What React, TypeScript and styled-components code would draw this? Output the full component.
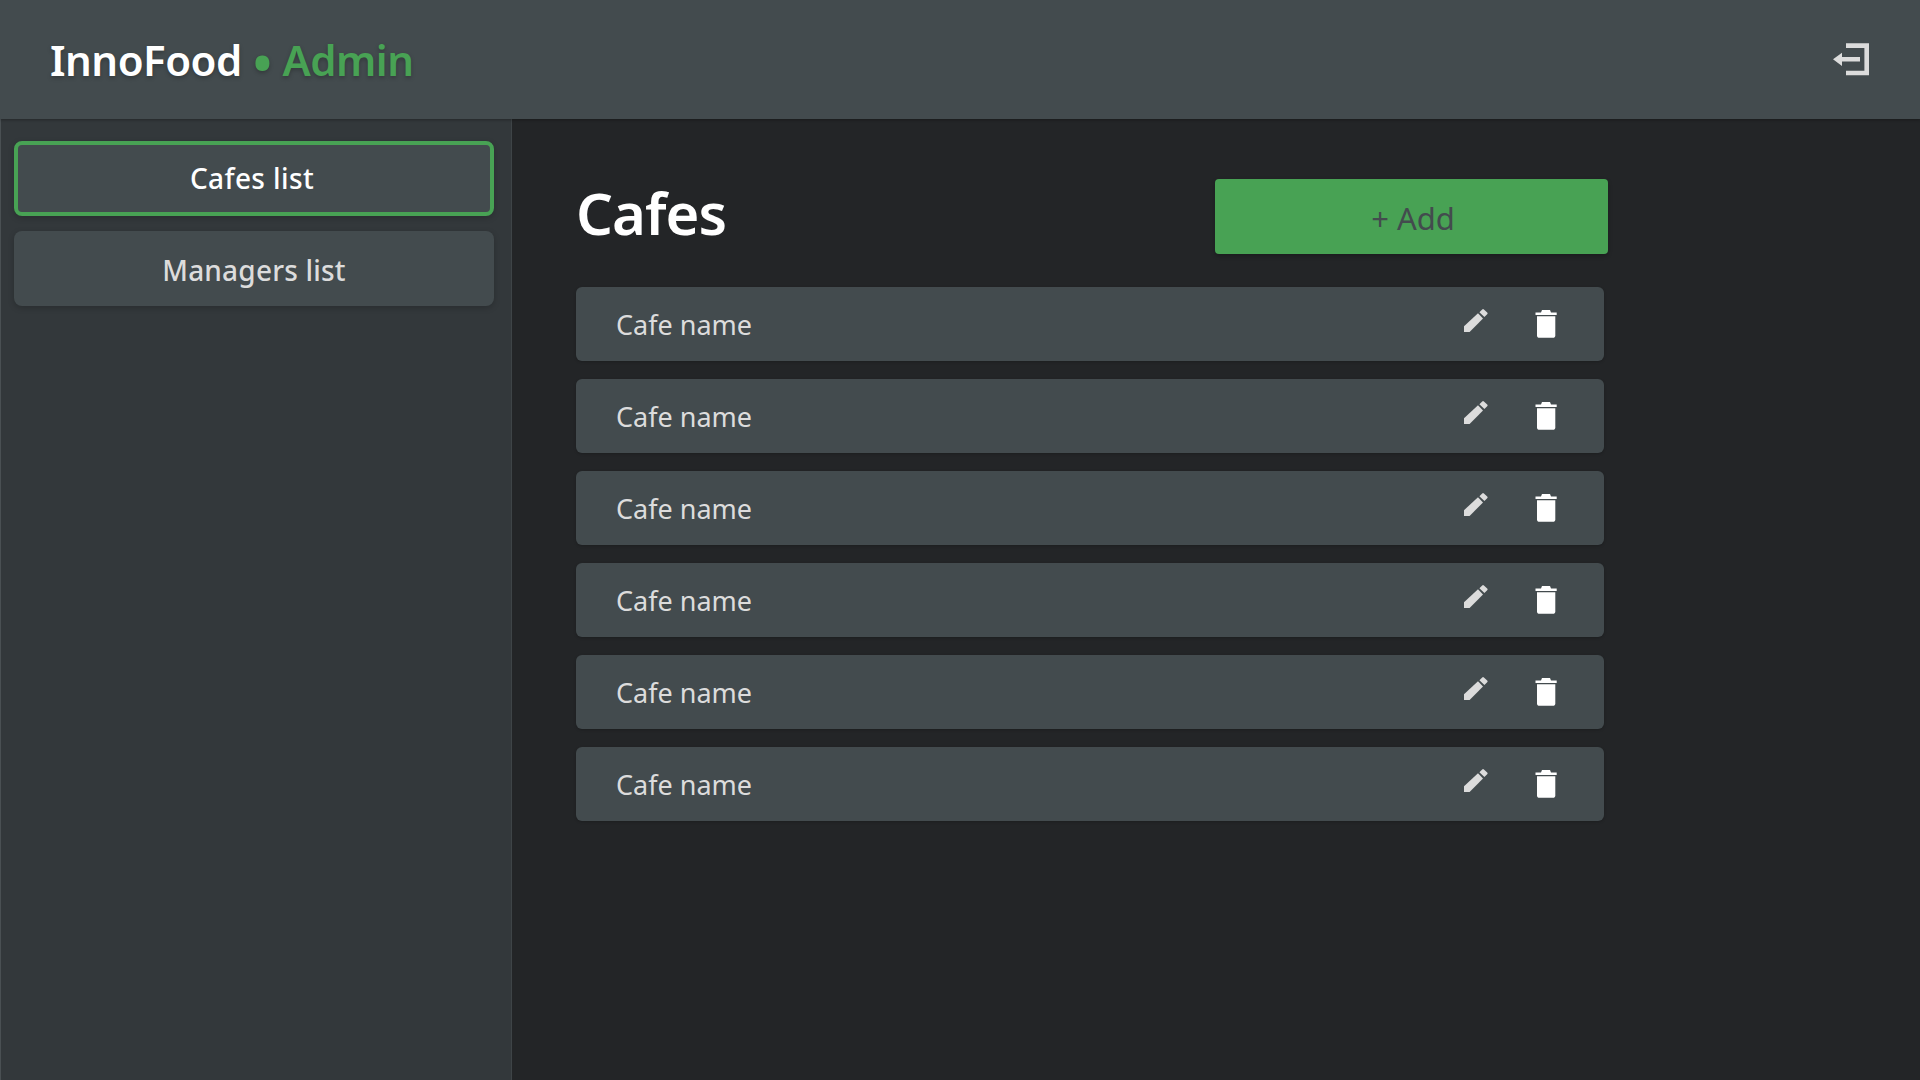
import React from 'react';
import styled, { createGlobalStyle } from 'styled-components';

const GlobalStyle = createGlobalStyle`
  html, body {
    margin: 0;
    padding: 0;
    height: 100%;
    background: #232527;
    font-family: "Noto Sans", "Open Sans", sans-serif;
  }
  * { box-sizing: border-box; }
`;

const Page = styled.div`
  width: 1920px;
  height: 1080px;
  display: flex;
  flex-direction: column;
  overflow: hidden;
`;

const Header = styled.header`
  height: 119px;
  flex: none;
  background: #434b4e;
  display: flex;
  align-items: center;
  justify-content: space-between;
  padding: 0 51px 0 50px;
  box-shadow: 0 1px 3px rgba(0, 0, 0, 0.3);
  position: relative;
`;

const Logo = styled.div`
  font-size: 42px;
  font-weight: 600;
  color: #fff;
  letter-spacing: -0.5px;
  white-space: nowrap;
  text-shadow: 0 2px 4px rgba(0, 0, 0, 0.25);
`;

const Accent = styled.span`
  color: #48a254;
`;

const Bullet = styled.span`
  font-size: 54px;
  line-height: 0;
  vertical-align: -7px;
`;

const Body = styled.div`
  flex: 1;
  display: flex;
  min-height: 0;
`;

const Sidebar = styled.aside`
  width: 512px;
  flex: none;
  background: #33383b;
  border-left: 1px solid #4a5053;
  border-right: 1px solid #3e4447;
  padding: 22px 17px 0 13px;
  display: flex;
  flex-direction: column;
  gap: 15px;
`;

const NavButton = styled.button<{ $active?: boolean }>`
  height: 75px;
  width: 100%;
  border-radius: 8px;
  background: #434b4e;
  border: ${(p) => (p.$active ? '4px solid #48a254' : 'none')};
  color: ${(p) => (p.$active ? '#fff' : '#dcdcdc')};
  font-family: inherit;
  font-size: 28px;
  font-weight: 500;
  box-shadow: 0 2px 6px rgba(0, 0, 0, 0.2);
  padding: ${(p) => (p.$active ? '0 4px 2px 0' : '2px 0 0 0')};
  letter-spacing: ${(p) => (p.$active ? '0.4px' : '0.2px')};
`;

const Main = styled.main`
  flex: 1;
  background: #232527;
  padding: 60px 0 0 64px;
`;

const Column = styled.div`
  width: 1032px;
`;

const TitleRow = styled.div`
  height: 75px;
  display: flex;
  align-items: center;
  justify-content: space-between;
  margin-bottom: 33px;
`;

const Title = styled.h1`
  margin: 0 0 8px;
  font-size: 58px;
  font-weight: 600;
  color: #fff;
  letter-spacing: -1px;
`;

const AddButton = styled.button`
  width: 393px;
  height: 75px;
  border: none;
  border-radius: 4px;
  background: #48a254;
  color: #434b4e;
  font-family: inherit;
  font-size: 31px;
  box-shadow: 0 2px 4px rgba(0, 0, 0, 0.25);
  padding: 2px 0 0 3px;
`;

const List = styled.div`
  width: 1028px;
  display: flex;
  flex-direction: column;
  gap: 18px;
`;

const Row = styled.div`
  height: 74px;
  border-radius: 6px;
  background: #434b4e;
  display: flex;
  align-items: center;
  padding: 0 46px 0 40px;
  box-shadow: 0 1px 3px rgba(0, 0, 0, 0.2);
`;

const RowName = styled.span`
  flex: 1;
  font-size: 27px;
  color: #dcdcdc;
`;

const RowActions = styled.div`
  display: flex;
  align-items: center;
  gap: 46px;
`;

const IconSlot = styled.span<{ $tone: string; $lift?: number }>`
  display: flex;
  color: ${(p) => p.$tone};
  margin-bottom: ${(p) => p.$lift ?? 0}px;
`;

const PencilIcon = () => (
  <svg width="24" height="24" viewBox="0 0 24 24" fill="currentColor">
    <path d="M0 17.2V23h5.6L19 9.4 14 4.2z" />
    <path d="M15.4 3.2L18.2 .5a1.2 1.2 0 0 1 1.7 0l3.3 3a1.2 1.2 0 0 1 0 1.7L20.4 8z" />
  </svg>
);

const TrashIcon = () => (
  <svg width="24" height="30" viewBox="0 0 24 30" fill="currentColor">
    <path d="M1.5 3.4H7L8 1h8l1 2.4h5.7V6H1.5z" />
    <path d="M3 7.2h18.3v19a2.6 2.6 0 0 1-2.6 2.6H5.6A2.6 2.6 0 0 1 3 26.2z" />
  </svg>
);

const ExitIcon = () => (
  <svg width="36" height="33" viewBox="0 0 36 33" fill="none">
    <path d="M13 2.6h20.7V30H13" stroke="#dcdcdc" strokeWidth="4.6" />
    <path d="M0 16.3L9 9.7V14h18v4.6H9V23z" fill="#dcdcdc" />
  </svg>
);

export default function App() {
  const cafes = ['Cafe name', 'Cafe name', 'Cafe name', 'Cafe name', 'Cafe name', 'Cafe name'];
  return (
    <Page>
      <GlobalStyle />
      <Header>
        <Logo>
          InnoFood <Accent><Bullet>•</Bullet> Admin</Accent>
        </Logo>
        <ExitIcon />
      </Header>
      <Body>
        <Sidebar>
          <NavButton $active>Cafes list</NavButton>
          <NavButton>Managers list</NavButton>
        </Sidebar>
        <Main>
          <Column>
            <TitleRow>
              <Title>Cafes</Title>
              <AddButton>+ Add</AddButton>
            </TitleRow>
            <List>
              {cafes.map((name, i) => (
                <Row key={i}>
                  <RowName>{name}</RowName>
                  <RowActions>
                    <IconSlot $tone="#dcdcdc" $lift={7}><PencilIcon /></IconSlot>
                    <IconSlot $tone="#fff"><TrashIcon /></IconSlot>
                  </RowActions>
                </Row>
              ))}
            </List>
          </Column>
        </Main>
      </Body>
    </Page>
  );
}
